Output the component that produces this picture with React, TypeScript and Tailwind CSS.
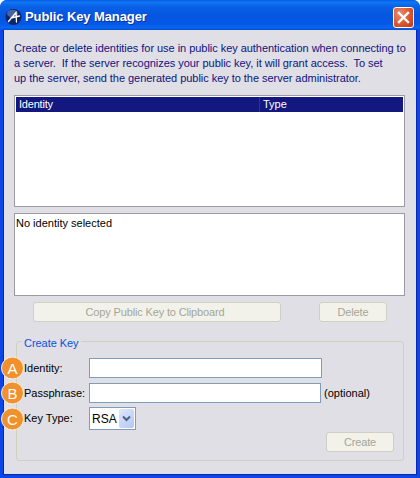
import React from "react";

function DisabledButton({ className, children }: { className: string; children: React.ReactNode }) {
  return (
    <div className={`h-5 flex items-center justify-center rounded-[3px] border border-[#cfcfc2] bg-[#f2f2ea] text-[#a5a597] tracking-[-0.15px] ${className}`}>
      {children}
    </div>
  );
}

function Badge({ letter }: { letter: string }) {
  return (
    <div className="absolute left-[-23px] top-1/2 -translate-y-1/2 w-[23px] h-[23px] rounded-full bg-[#f0912d] border-[1.5px] border-[#f6f2ec] flex items-center justify-center text-white text-[15px] leading-none">
      {letter}
    </div>
  );
}

export default function App() {
  return (
    <div className="w-[420px] h-[478px] flex flex-col rounded-t-[7px] overflow-hidden bg-[#0c46e6] font-['Liberation_Sans',Arial,sans-serif] text-[11px] text-black">
      <div className="h-[30px] shrink-0 flex items-center pt-[4px] pl-[5px] pr-[6px] bg-[linear-gradient(180deg,#0a5be6_0%,#0f78f4_8%,#0a62e6_20%,#0556e0_50%,#0558e6_80%,#0a66ef_92%,#0350d4_100%)]">
        <svg width="18" height="18" viewBox="0 0 18 18" className="shrink-0">
          <circle cx="8.5" cy="9" r="8" fill="#0e2568" />
          <ellipse cx="7.5" cy="5.5" rx="5.5" ry="3.8" fill="#6d8fcb" opacity="0.6" />
          <path d="M3.5 13.5 C6 10.5 8.5 7.5 11 4.5 L11.5 14 M6 10 L14.5 8" fill="none" stroke="#ffffff" strokeWidth="1.3" strokeLinecap="round" />
        </svg>
        <div className="ml-[2px] text-white font-bold text-[13px] tracking-[-0.1px] [text-shadow:1px_1px_0_#0a2f9c]">Public Key Manager</div>
        <div className="ml-auto w-[21px] h-[21px] rounded-[3px] border border-white bg-[radial-gradient(circle_at_30%_30%,#ec8a6c,#d9512a_60%,#bd3a16)] flex items-center justify-center">
          <svg width="13" height="13" viewBox="0 0 13 13">
            <path d="M2 2 L11 11 M11 2 L2 11" stroke="#ffffff" strokeWidth="2.4" strokeLinecap="square" />
          </svg>
        </div>
      </div>

      <div className="flex-1 mx-[3px] mb-[3px] border border-t-0 border-[#0826b0] bg-[#dfdfe5] flex flex-col pt-[11px] pl-[10px] pr-[11px]">
        <p className="text-[#10127f] leading-[15px] whitespace-pre tracking-[-0.04px]">
          {"Create or delete identities for use in public key authentication when connecting to\na server.  If the server recognizes your public key, it will grant access.  To set\nup the server, send the generated public key to the server administrator."}
        </p>

        <div className="mt-[9px] h-[112px] border border-[#9b9ba5] bg-white p-px">
          <div className="h-[15px] flex bg-[#12187f] text-white leading-[15px]">
            <div className="w-[244px] pl-[3px] border-r border-[#2c3190] tracking-[-0.2px]">Identity</div>
            <div className="pl-[3px]">Type</div>
          </div>
        </div>

        <div className="mt-[6px] h-[83px] border border-[#9b9ba5] bg-white px-px py-[2px] leading-[15px]">
          No identity selected
        </div>

        <div className="mt-[6px] flex">
          <DisabledButton className="ml-[19px] w-[248px] pr-[4px]">Copy Public Key to Clipboard</DisabledButton>
          <DisabledButton className="ml-[38px] w-[68px]">Delete</DisabledButton>
        </div>

        <div className="relative mt-[19px] ml-[2px] w-[388px] h-[120px] rounded-[3px] border border-[#d0d0bf] pl-[7px]">
          <div className="absolute left-[5px] top-[-6px] px-[2px] bg-[#dfdfe5] text-[#0a50e0] leading-[14px] tracking-[-0.05px]">Create Key</div>
          <div className="mt-[16px] flex flex-col">
            <div className="relative h-5 flex items-center">
              <Badge letter="A" />
              <div className="w-[65px]">Identity:</div>
              <div className="w-[233px] h-5 border border-[#7f9db9] bg-white" />
            </div>
            <div className="relative h-5 mt-[5px] flex items-center">
              <Badge letter="B" />
              <div className="w-[65px]">Passphrase:</div>
              <div className="w-[232px] h-5 border border-[#7f9db9] bg-white" />
              <div className="ml-[3px]">(optional)</div>
            </div>
            <div className="relative h-[23px] mt-[4px] flex items-center">
              <Badge letter="C" />
              <div className="w-[65px]">Key Type:</div>
              <div className="w-[47px] h-[23px] border border-[#7f9db9] bg-white flex items-center pl-[2px] pr-px">
                <span className="text-[12px]">RSA</span>
                <div className="ml-auto w-[15px] h-[19px] rounded-[2px] bg-[linear-gradient(135deg,#dfe8fb,#b3c7f3)] flex items-center justify-center">
                  <svg width="9" height="7" viewBox="0 0 9 7">
                    <path d="M1 1.5 L4.5 5 L8 1.5" fill="none" stroke="#4d6185" strokeWidth="2" />
                  </svg>
                </div>
              </div>
            </div>
          </div>
          <div className="flex justify-end pr-[9px] mt-[2px]">
            <DisabledButton className="w-[68px]">Create</DisabledButton>
          </div>
        </div>
      </div>
    </div>
  );
}
